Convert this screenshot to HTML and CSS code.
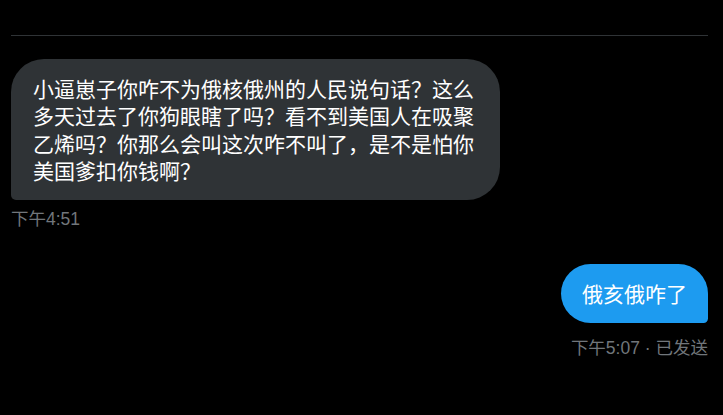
FILE: index.html
```html
<!DOCTYPE html>
<html lang="zh-CN">
<head>
<meta charset="utf-8">
<title>DM</title>
<link rel="stylesheet" href="styles.css">
</head>
<body>
<div class="page">
  <div class="divider"></div>
  <div class="msg msg-in">
    <div class="bubble bubble-in">小逼崽子你咋不为俄核俄州的人民说句话？这么多天过去了你狗眼瞎了吗？看不到美国人在吸聚乙烯吗？你那么会叫这次咋不叫了，是不是怕你美国爹扣你钱啊？</div>
    <div class="time">下午4:51</div>
  </div>
  <div class="msg msg-out">
    <div class="bubble bubble-out">俄亥俄咋了</div>
    <div class="time">下午5:07 · 已发送</div>
  </div>
</div>
</body>
</html>
```

FILE: styles.css
```css
html, body {
  margin: 0;
  padding: 0;
  background: #000;
}
body {
  font-family: "Liberation Sans", "Noto Sans CJK SC", sans-serif;
  color: #fff;
}
.page {
  padding: 35px 15px 0 11px;
  display: flex;
  flex-direction: column;
}
.divider {
  height: 1px;
  background: #2f3336;
}
.msg {
  display: flex;
  flex-direction: column;
}
.msg-in {
  align-items: flex-start;
  margin-top: 23px;
}
.msg-out {
  align-items: flex-end;
  margin-top: 33px;
}
.bubble {
  font-family: "Noto Sans CJK SC", sans-serif;
  font-size: 21px;
  line-height: 27.3px;
  padding: 16px 22px;
  box-sizing: border-box;
}
.bubble-in {
  background: #2f3336;
  max-width: 489px;
  border-radius: 33px 33px 33px 5px;
}
.bubble-out {
  background: #1d9bf0;
  border-radius: 33px 33px 5px 33px;
  padding: 16px 21px;
}
.time {
  font-size: 17.5px;
  line-height: 24px;
  color: #71767b;
}
.msg-in .time {
  margin-top: 7px;
}
.msg-out .time {
  margin-top: 13px;
}
```
